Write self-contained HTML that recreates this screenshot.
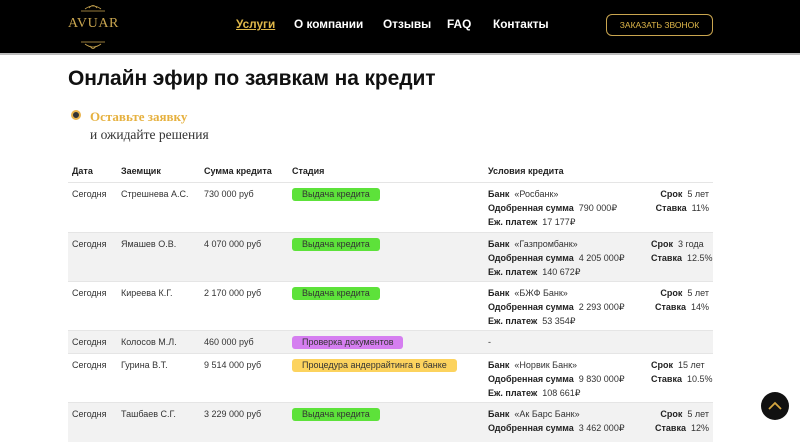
<!DOCTYPE html>
<html><head><meta charset="utf-8"><style>
*{margin:0;padding:0;box-sizing:border-box}
body{width:800px;height:428px;overflow:hidden;background:#fff;font-family:"Liberation Sans",sans-serif;position:relative;color:#333}
.hdr{position:absolute;left:0;top:0;width:800px;height:55px;background:#000;border-bottom:2px solid #bbb}
.logo{position:absolute;left:68px;top:16px;font-family:"Liberation Serif",serif;color:#c9a54f;font-size:14px;letter-spacing:.6px}
.nav a{position:absolute;top:17px;color:#fff;font-weight:bold;font-size:11.8px;text-decoration:none}
.btn{position:absolute;left:606px;top:14px;width:107px;height:22px;border:1px solid #c9a54f;border-radius:6px;color:#e0b84a;font-size:8.5px;text-align:center;line-height:20px}
h1{position:absolute;left:68px;top:67px;font-size:21px;color:#111;font-weight:bold;letter-spacing:-.1px}
.dot{position:absolute;left:71px;top:110px;width:10px;height:10px;border-radius:50%;background:#333;border:2px solid #e9b24a}
.s1{position:absolute;left:90px;top:109px;font-family:"Liberation Serif",serif;font-weight:bold;color:#e6b13f;font-size:13px}
.s2{position:absolute;left:90px;top:127px;font-family:"Liberation Serif",serif;color:#333;font-size:13.5px}
.t{position:absolute;left:68px;top:160px;width:645px;font-size:9px}
.row{position:relative;border-top:1px solid #e5e5e5}
.g{background:#f2f2f2}
.c{position:absolute;top:4px;line-height:14px}
.b{font-weight:bold;color:#222}
.tag{position:absolute;left:224px;top:5px;height:13px;padding:0 10px;border-radius:3px;font-size:9px;line-height:13px;color:#333}
.up{position:absolute;left:761px;top:392px;width:28px;height:28px;border-radius:50%;background:#111}
</style></head><body>
<div class="hdr">
<svg style="position:absolute;left:73px;top:2px" width="40" height="52" viewBox="0 0 40 52"><g stroke="#c9a54f" fill="none" stroke-width=".8"><path d="M8 9h24M12 7q8-6 16 0M16 6q4-5 8 0"/><path d="M8 40h24M12 42q8 6 16 0M17 44q3 5 6 0"/></g></svg>
<div class="logo">AVUAR</div>
<div class="nav"><a style="left:236px;color:#e0b84a;text-decoration:underline">Услуги</a><a style="left:294px">О компании</a><a style="left:383px">Отзывы</a><a style="left:447px">FAQ</a><a style="left:493px">Контакты</a></div>
<div class="btn">ЗАКАЗАТЬ ЗВОНОК</div>
</div>
<h1>Онлайн эфир по заявкам на кредит</h1>
<div class="dot"></div><div class="s1">Оставьте заявку</div><div class="s2">и ожидайте решения</div>
<div class="t">
<div class="row" style="height:22px;border:none"><span class="c b" style="left:4px">Дата</span><span class="c b" style="left:53px">Заемщик</span><span class="c b" style="left:136px">Сумма кредита</span><span class="c b" style="left:224px">Стадия</span><span class="c b" style="left:420px">Условия кредита</span></div>

<div class="row" style="height:50px"><span class="c" style="left:4px">Сегодня</span><span class="c" style="left:53px">Стрешнева А.С.</span><span class="c" style="left:136px">730 000 руб</span><span class="tag" style="background:#5de23a">Выдача кредита</span><span class="c" style="left:420px"><b class="b">Банк</b>&nbsp; «Росбанк»<br><b class="b">Одобренная сумма</b>&nbsp; 790 000₽<br><b class="b">Еж. платеж</b>&nbsp; 17 177₽</span><span class="c" style="right:4px;text-align:right"><b class="b">Срок</b>&nbsp; 5 лет<br><b class="b">Ставка</b>&nbsp; 11%</span></div>

<div class="row g" style="height:49px"><span class="c" style="left:4px">Сегодня</span><span class="c" style="left:53px">Ямашев О.В.</span><span class="c" style="left:136px">4 070 000 руб</span><span class="tag" style="background:#5de23a">Выдача кредита</span><span class="c" style="left:420px"><b class="b">Банк</b>&nbsp; «Газпромбанк»<br><b class="b">Одобренная сумма</b>&nbsp; 4 205 000₽<br><b class="b">Еж. платеж</b>&nbsp; 140 672₽</span><span class="c" style="left:583px"><b class="b">Срок</b>&nbsp; 3 года<br><b class="b">Ставка</b>&nbsp; 12.5%</span></div>

<div class="row" style="height:49px"><span class="c" style="left:4px">Сегодня</span><span class="c" style="left:53px">Киреева К.Г.</span><span class="c" style="left:136px">2 170 000 руб</span><span class="tag" style="background:#5de23a">Выдача кредита</span><span class="c" style="left:420px"><b class="b">Банк</b>&nbsp; «БЖФ Банк»<br><b class="b">Одобренная сумма</b>&nbsp; 2 293 000₽<br><b class="b">Еж. платеж</b>&nbsp; 53 354₽</span><span class="c" style="right:4px;text-align:right"><b class="b">Срок</b>&nbsp; 5 лет<br><b class="b">Ставка</b>&nbsp; 14%</span></div>

<div class="row g" style="height:23px"><span class="c" style="left:4px">Сегодня</span><span class="c" style="left:53px">Колосов М.Л.</span><span class="c" style="left:136px">460 000 руб</span><span class="tag" style="background:#d57ef0">Проверка документов</span><span class="c" style="left:420px">-</span></div>

<div class="row" style="height:49px"><span class="c" style="left:4px">Сегодня</span><span class="c" style="left:53px">Гурина В.Т.</span><span class="c" style="left:136px">9 514 000 руб</span><span class="tag" style="background:#fcd35e">Процедура андеррайтинга в банке</span><span class="c" style="left:420px"><b class="b">Банк</b>&nbsp; «Норвик Банк»<br><b class="b">Одобренная сумма</b>&nbsp; 9 830 000₽<br><b class="b">Еж. платеж</b>&nbsp; 108 661₽</span><span class="c" style="left:583px"><b class="b">Срок</b>&nbsp; 15 лет<br><b class="b">Ставка</b>&nbsp; 10.5%</span></div>

<div class="row g" style="height:40px"><span class="c" style="left:4px">Сегодня</span><span class="c" style="left:53px">Ташбаев С.Г.</span><span class="c" style="left:136px">3 229 000 руб</span><span class="tag" style="background:#5de23a">Выдача кредита</span><span class="c" style="left:420px"><b class="b">Банк</b>&nbsp; «Ак Барс Банк»<br><b class="b">Одобренная сумма</b>&nbsp; 3 462 000₽</span><span class="c" style="right:4px;text-align:right"><b class="b">Срок</b>&nbsp; 5 лет<br><b class="b">Ставка</b>&nbsp; 12%</span></div>
</div>
<div class="up"><svg width="28" height="28"><path d="M8 17l6-6 6 6" stroke="#d4a640" stroke-width="1.8" fill="none"/></svg></div>
</body></html>
